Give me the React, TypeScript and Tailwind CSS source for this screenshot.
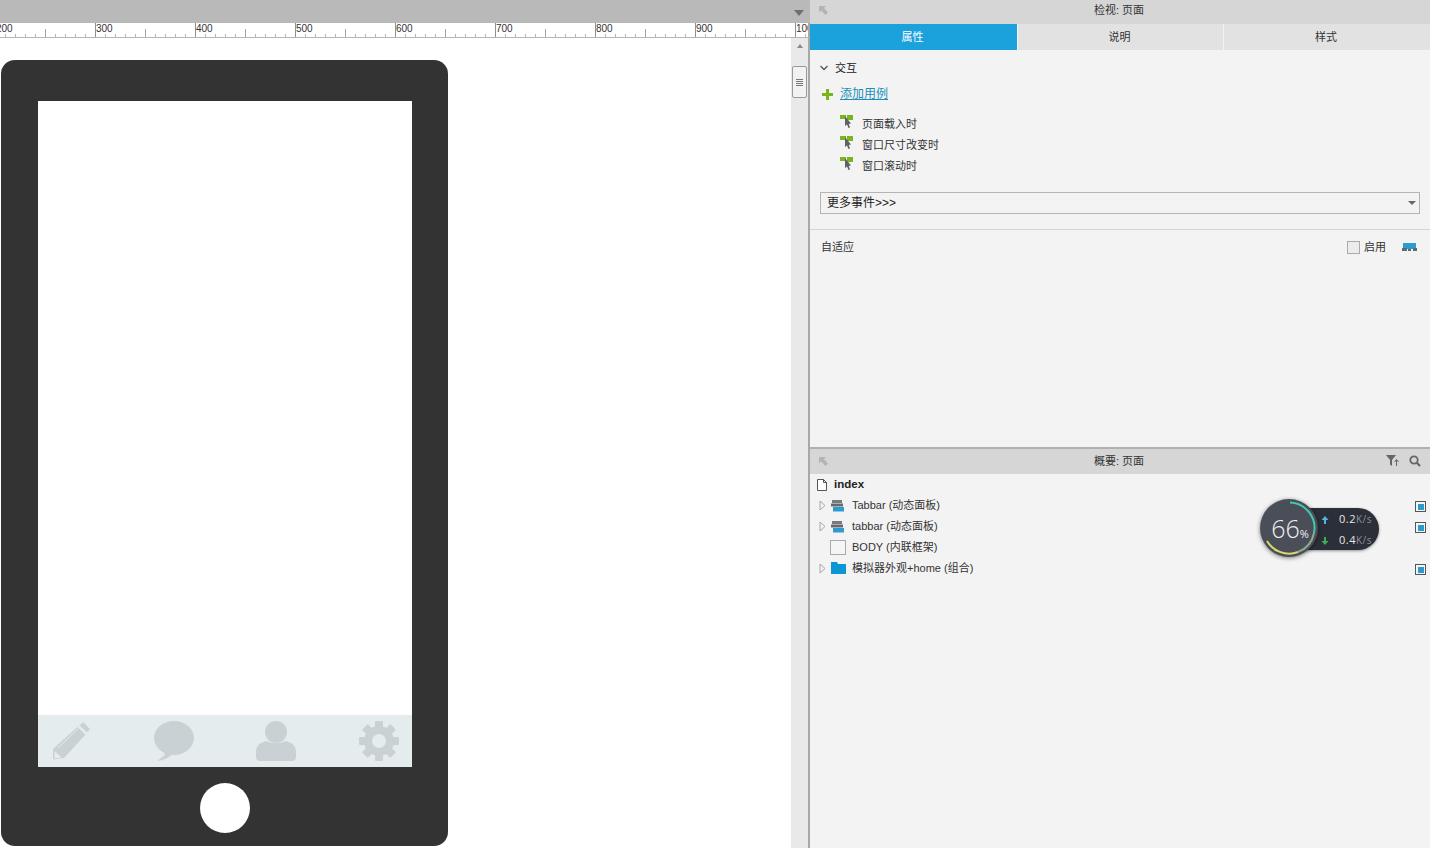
const cjk = 'font-["Liberation_Sans","Noto_Sans_CJK_SC",sans-serif]';

const rulerLabels = ['200', '300', '400', '500', '600', '700', '800', '900', '1000'];

const RulerTicks = () => (
  <svg width="100" height="15" className="absolute left-0 top-0">
    {[10, 20, 30, 40, 60, 70, 80, 90].map((x) => (
      <line key={x} x1={x + 0.5} x2={x + 0.5} y1="11" y2="14" stroke="#b5b5b5" />
    ))}
    <line x1="50.5" x2="50.5" y1="6" y2="14" stroke="#a5a5a5" />
    <line x1="0.5" x2="0.5" y1="0" y2="15" stroke="#8f8f8f" />
  </svg>
);

const Pencil = () => (
  <svg width="40" height="40" viewBox="0 0 40 40">
    <path d="M32 1 L39 8 L36 11.500 L28.500 4.500 Z" fill="#c9d1d4" />
    <path d="M26.500 6 L34.500 13.500 L13 37 L2 38.500 L2 28 Z" fill="#c9d1d4" />
    <path d="M3.500 30 L10.500 36.500 L3.500 37.500 Z" fill="#e4ecee" />
    <path d="M7 27 L27 7.500" stroke="#e4ecee" strokeWidth="1" />
  </svg>
);

const Bubble = () => (
  <svg width="40" height="40" viewBox="0 0 40 40">
    <ellipse cx="20" cy="17" rx="20" ry="17" fill="#c9d1d4" />
    <path d="M9 28 L11 34 L3 40 C9 39.500 14 37 19 33 Z" fill="#c9d1d4" />
  </svg>
);

const Person = () => (
  <svg width="40" height="40" viewBox="0 0 40 40">
    <ellipse cx="20" cy="11" rx="11" ry="11" fill="#c9d1d4" />
    <path d="M11 20 C14 23 26 23 29 20 C35 21 40 24 40 31 L40 36 C40 38.500 38.500 40 36 40 L4 40 C1.500 40 0 38.500 0 36 L0 31 C0 24 5 21 11 20 Z" fill="#c9d1d4" />
  </svg>
);

const Gear = () => (
  <svg width="40" height="40" viewBox="0 0 40 40">
    <g fill="#c9d1d4">
      <circle cx="20" cy="20" r="15" />
      {[0, 45, 90, 135, 180, 225, 270, 315].map((a) => (
        <rect key={a} x="16" y="0" width="8" height="9" rx="1" transform={`rotate(${a} 20 20)`} />
      ))}
    </g>
    <circle cx="20" cy="20" r="7" fill="#e4ecee" />
  </svg>
);

const CaseIcon = () => (
  <svg width="14" height="14" viewBox="0 0 14 14">
    <rect x="0" y="0" width="6" height="4" fill="#7ab51d" />
    <rect x="7" y="0" width="6" height="5" fill="#7ab51d" />
    <path d="M5 1 L5 11 L7 9.500 L8.500 13 L10 12.500 L8.800 9 L11 8.500 Z" fill="#5f6268" />
  </svg>
);

const LayersIcon = () => (
  <svg width="14" height="12" viewBox="0 0 14 12">
    <rect x="1" y="0" width="10" height="3" fill="#777b80" />
    <rect x="0" y="3.500" width="12" height="3" fill="#666a70" />
    <rect x="2" y="7" width="11" height="4.500" fill="#2e9bd0" />
  </svg>
);

const Arrow = () => (
  <svg width="7" height="11" viewBox="0 0 7 11">
    <path d="M1 1 L6 5.500 L1 10 Z" fill="#f3f3f3" stroke="#a8a8a8" />
  </svg>
);

const Mark = () => (
  <div className="mt-[2px] flex h-[11px] w-[11px] items-center justify-center border border-[#555] bg-[#f5f5f5]">
    <div className="h-[6px] w-[6px] bg-[#2a9ad0]" />
  </div>
);

const PinIcon = () => (
  <svg width="9" height="9" viewBox="0 0 9 9">
    <path d="M0 0 H7 L5 2 L9 6.500 L6.500 9 L2 4.500 L0 6.500 Z" fill="#b4b4b4" />
  </svg>
);

const TreeRow = ({ icon, label, mark, arrow = true }: { icon: React.ReactNode; label: string; mark?: boolean; arrow?: boolean }) => (
  <div className="flex h-[21px] items-center pl-[9px] pr-[4px]">
    <div className="flex w-[12px] items-center">{arrow && <Arrow />}</div>
    <div className="flex w-[21px] items-center">{icon}</div>
    <span className="flex-1 text-[11px] text-[#333]">{label}</span>
    {mark && <Mark />}
  </div>
);

const NetSpeed = () => (
  <div className="absolute left-[1260px] top-[499px] h-[58px] w-[120px]">
    <div className="absolute left-[29px] top-[9px] flex h-[42px] w-[90px] flex-col justify-center gap-[3px] rounded-r-[21px] bg-[#2b2f38] pl-[32px] pt-[2px] shadow-[0_1px_3px_rgba(0,0,0,0.4)] font-['Open_Sans',sans-serif]">
      <div className="flex h-[18px] items-center">
        <svg width="8" height="8" viewBox="0 0 8 8" className="mr-[10px] shrink-0">
          <path d="M4 0 L7.500 4 H5 V8 H3 V4 H0.500 Z" fill="#4fb4e8" />
        </svg>
        <span className="text-[11px] tracking-[0.5px] text-[#e6e6e6]">0.2</span>
        <span className="text-[10px] tracking-[0.5px] text-[#8a8f98]">K/s</span>
      </div>
      <div className="flex h-[18px] items-center">
        <svg width="8" height="8" viewBox="0 0 8 8" className="mr-[10px] shrink-0">
          <path d="M4 8 L7.500 4 H5 V0 H3 V4 H0.500 Z" fill="#3fae58" />
        </svg>
        <span className="text-[11px] tracking-[0.5px] text-[#e6e6e6]">0.4</span>
        <span className="text-[10px] tracking-[0.5px] text-[#8a8f98]">K/s</span>
      </div>
    </div>
    <div className="absolute left-0 top-0 flex h-[58px] w-[58px] items-center justify-center rounded-full bg-[#4a4e59] shadow-[0_1px_4px_rgba(0,0,0,0.5)]">
      <svg width="58" height="58" viewBox="0 0 58 58" className="absolute left-0 top-0">
        <path d="M30 3.500 A25.500 25.500 0 0 1 54 34" fill="none" stroke="#45c8b0" strokeWidth="2" />
        <path d="M54 34 A25.500 25.500 0 0 1 38 53" fill="none" stroke="#8fa98f" strokeWidth="2" />
        <path d="M38 53 A25.500 25.500 0 0 1 7 42" fill="none" stroke="#dcd96a" strokeWidth="2" />
      </svg>
      <span className="relative ml-[2px] font-['Open_Sans',sans-serif] text-[25px] font-light leading-none text-[#eeeeee]">
        66<span className="text-[11px] font-normal">%</span>
      </span>
    </div>
  </div>
);

export default function App() {
  return (
    <div className={`relative flex h-[848px] w-[1430px] overflow-hidden bg-white ${cjk}`}>
      {/* canvas side */}
      <div className="flex h-full w-[810px] shrink-0 flex-col">
        <div className="flex h-[23px] shrink-0 items-end justify-end bg-[#b9b9b9] pb-[7px] pr-[6px]">
          <div className="h-0 w-0 border-x-[5px] border-t-[6px] border-x-transparent border-t-[#6f6f6f]" />
        </div>
        <div className="flex h-[15px] shrink-0 overflow-hidden border-b border-[#b5b5b5] bg-white">
          <div className="flex w-[808px] overflow-hidden">
            <div className="ml-[-5px] flex">
              {rulerLabels.map((label) => (
                <div key={label} className="relative h-[15px] w-[100px] shrink-0">
                  <RulerTicks />
                  <span className="absolute left-[1px] top-0 text-[10px] leading-[12px] text-[#333]">{label}</span>
                </div>
              ))}
            </div>
          </div>
          <div className="h-full w-[2px] bg-[#a8a8a8]" />
        </div>
        <div className="flex min-h-0 flex-1">
          <div className="flex-1 pl-[1px] pt-[22px]">
            <div className="flex h-[786px] w-[447px] flex-col items-center rounded-[14px] bg-[#333333] pt-[41px]">
              <div className="ml-[1px] flex h-[666px] w-[374px] flex-col justify-end bg-white">
                <div className="flex h-[52px] items-center justify-between bg-[#e4ecee] px-[13px]">
                  <Pencil />
                  <Bubble />
                  <Person />
                  <Gear />
                </div>
              </div>
              <div className="ml-[1px] mt-[16px] h-[50px] w-[50px] rounded-full bg-white" />
            </div>
          </div>
          <div className="flex w-[17px] flex-col items-center bg-[#e9e9e9] pt-[6px]">
            <div className="h-0 w-0 border-x-[3px] border-b-[4px] border-x-transparent border-b-[#8a8a8a]" />
            <div className="mt-[18px] flex h-[32px] w-[15px] flex-col items-center justify-center gap-[1px] rounded-[2px] border border-[#9a9a9a] bg-[#f2f2f2]">
              <div className="h-px w-[7px] bg-[#777]" />
              <div className="h-px w-[7px] bg-[#777]" />
              <div className="h-px w-[7px] bg-[#777]" />
              <div className="h-px w-[7px] bg-[#777]" />
            </div>
          </div>
          <div className="w-[2px] bg-[#a8a8a8]" />
        </div>
      </div>

      {/* right panels */}
      <div className="flex h-full flex-1 flex-col bg-[#f3f3f3]">
        <div className="relative flex h-[24px] shrink-0 items-center justify-center bg-[#d6d6d6] pb-[4px] pr-[2px]">
          <div className="absolute left-[9px] top-[6px]"><PinIcon /></div>
          <span className="text-[11px] text-[#333]">检视: 页面</span>
        </div>
        <div className="flex h-[26px] shrink-0 text-[11px]">
          <div className="flex w-[207px] items-center justify-center bg-[#1ba1db] pr-[2px] text-white">属性</div>
          <div className="flex w-[206px] items-center justify-center border-l border-[#f3f3f3] bg-[#e2e2e2] pr-[2px] text-[#333]">说明</div>
          <div className="flex flex-1 items-center justify-center border-l border-[#f3f3f3] bg-[#e2e2e2] pr-[2px] text-[#333]">样式</div>
        </div>

        <div className="h-[397px] shrink-0">
          <div className="flex h-[36px] items-center pl-[10px]">
            <svg width="8" height="6" viewBox="0 0 8 6" className="mr-[7px]">
              <path d="M0.500 1 L4 4.500 L7.500 1" fill="none" stroke="#555" strokeWidth="1.300" />
            </svg>
            <span className="text-[11px] text-[#222]">交互</span>
          </div>
          <div className="flex h-[16px] items-center pl-[12px]">
            <svg width="11" height="11" viewBox="0 0 11 11" className="mr-[7px]">
              <path d="M4 0 H7 V4 H11 V7 H7 V11 H4 V7 H0 V4 H4 Z" fill="#7ab51d" />
            </svg>
            <span className="text-[12px] text-[#1b8fb8] underline">添加用例</span>
          </div>
          <div className="mt-[12px] flex flex-col pl-[30px]">
            {['页面载入时', '窗口尺寸改变时', '窗口滚动时'].map((t) => (
              <div key={t} className="flex h-[21px] items-center">
                <div className="mb-[5px] mr-[8px] flex w-[14px]"><CaseIcon /></div>
                <span className="text-[11px] text-[#333]">{t}</span>
              </div>
            ))}
          </div>
          <div className="mx-[10px] mt-[15px] flex h-[22px] items-center justify-between border border-[#b5b5b5] pl-[6px] pr-[2px]">
            <span className="text-[12px] text-[#222]">更多事件&gt;&gt;&gt;</span>
            <div className="mr-[1px] h-0 w-0 border-x-[4px] border-t-[4px] border-x-transparent border-t-[#666]" />
          </div>
          <div className="mt-[15px] h-px bg-[#d5d5d5]" />
          <div className="flex h-[35px] items-center pl-[11px] pr-[13px]">
            <span className="flex-1 text-[11px] text-[#333]">自适应</span>
            <div className="h-[13px] w-[13px] border border-[#aaa] bg-[#ececec]" />
            <span className="ml-[4px] mr-[16px] text-[11px] text-[#333]">启用</span>
            <svg width="15" height="9" viewBox="0 0 15 9">
              <rect x="1" y="0" width="13" height="6" fill="#2e9bd0" />
              <rect x="0" y="5" width="5" height="3" fill="#5f6a75" />
              <rect x="6" y="6" width="3" height="2" fill="#5f6a75" />
              <rect x="11" y="5" width="4" height="3" fill="#5f6a75" />
            </svg>
          </div>
        </div>

        <div className="h-[2px] shrink-0 bg-[#b0b0b0]" />
        <div className="relative flex h-[25px] shrink-0 items-center justify-center bg-[#d6d6d6] pr-[2px]">
          <div className="absolute left-[9px] top-[8px]"><PinIcon /></div>
          <span className="text-[11px] text-[#333]">概要: 页面</span>
          <div className="absolute right-[9px] top-[6px] flex items-center gap-[9px]">
            <svg width="14" height="12" viewBox="0 0 14 12">
              <path d="M0 0 H10 L6 5 V11 L4 9.500 V5 Z" fill="#666" />
              <path d="M10.500 11 V5 M8.500 7 L10.500 4.500 L12.500 7" fill="none" stroke="#666" strokeWidth="1" />
            </svg>
            <svg width="12" height="12" viewBox="0 0 12 12">
              <circle cx="5" cy="5" r="3.700" fill="none" stroke="#666" strokeWidth="1.800" />
              <path d="M7.800 7.800 L11 11" stroke="#666" strokeWidth="2.200" />
            </svg>
          </div>
        </div>

        <div className="flex h-[20px] items-center pl-[7px] pt-[1px]">
          <svg width="10" height="12" viewBox="0 0 10 12" className="mr-[7px]">
            <path d="M0.500 0.500 H6.500 L9.500 3.500 V11.500 H0.500 Z M6.500 0.500 V3.500 H9.500" fill="#fff" stroke="#555" />
          </svg>
          <span className="text-[11.500px] font-bold text-[#222]">index</span>
        </div>
        <div className="pt-[1px]">
          <TreeRow icon={<LayersIcon />} label="Tabbar (动态面板)" mark />
          <TreeRow icon={<LayersIcon />} label="tabbar (动态面板)" mark />
          <TreeRow
            arrow={false}
            icon={<div className="ml-[-1px] h-[15px] w-[16px] border border-[#aaa] bg-[#f5f5f5]" />}
            label="BODY (内联框架)"
          />
          <TreeRow
            icon={
              <svg width="15" height="12" viewBox="0 0 15 12" className="mb-[1px]">
                <path d="M0 0 H6 L7 2 H15 V12 H0 Z" fill="#0d96d4" />
              </svg>
            }
            label="模拟器外观+home (组合)"
            mark
          />
        </div>
      </div>

      <NetSpeed />
    </div>
  );
}
